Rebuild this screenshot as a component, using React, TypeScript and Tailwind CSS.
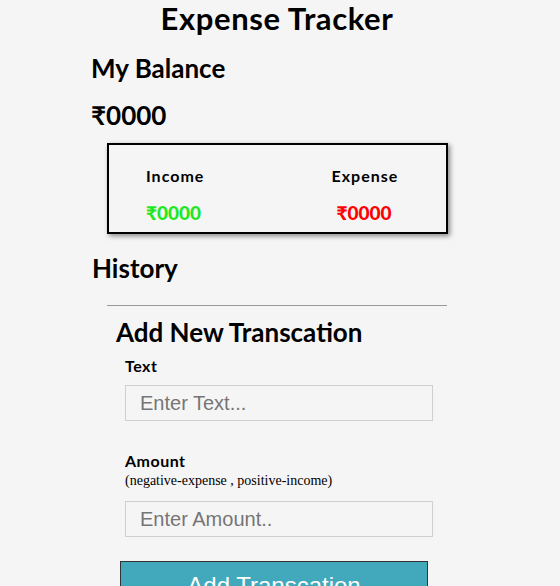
import React from "react";

export default function App() {
  const head = { fontFamily: "Lato, 'Noto Sans', sans-serif" };
  return (
    <div className="min-h-[586px] w-full bg-[#f5f5f5] text-black overflow-hidden" style={head}>
      <div className="ml-[91px] w-[372px]">
        <h1 className="text-center text-[31px] font-bold leading-[36px] tracking-[0.6px]">Expense Tracker</h1>
        <h2 className="mt-[17px] text-[26px] font-bold leading-[30px]">My Balance</h2>
        <div className="mt-[17px] text-[26px] font-bold leading-[30px]">₹0000</div>
        <div className="mt-[13px] ml-[16px] w-[341px] h-[91px] border-2 border-black shadow-[2px_2px_5px_rgba(0,0,0,0.45)] flex">
          <div className="w-1/2 pl-[37px] pt-[21px]">
            <div className="text-[16px] font-bold tracking-[1px] leading-[20px]">Income</div>
            <div className="mt-[17px] text-[19px] font-black leading-[20px] text-[#1fe81f]">₹0000</div>
          </div>
          <div className="w-1/2 pl-[54px] pt-[21px]">
            <div className="text-[16px] font-bold tracking-[1px] leading-[20px]">Expense</div>
            <div className="mt-[17px] ml-[5px] text-[19px] font-black leading-[20px] text-[#ff0000]">₹0000</div>
          </div>
        </div>
        <h2 className="mt-[19px] ml-[1px] text-[26px] font-bold leading-[30px]">History</h2>
        <div className="mt-[22px] ml-[16px] w-[340px] h-px bg-[#999]" />
        <h2 className="mt-[11px] ml-[25px] text-[26px] font-bold leading-[30px]">Add New Transcation</h2>
        <div className="ml-[34px]">
          <div className="mt-[9px] text-[16px] font-bold leading-[20px] tracking-[0.5px]">Text</div>
          <div className="mt-[9px] w-[308px] h-[36px] border border-[#cfcfcf] flex items-center pl-[14px] text-[20px] text-[#757575]" style={{ fontFamily: "'Liberation Sans', Arial, sans-serif" }}>Enter Text...</div>
          <div className="mt-[30px] text-[16px] font-bold leading-[20px] tracking-[0.5px]">Amount</div>
          <div className="text-[14px] leading-[16px] mt-[2px]" style={{ fontFamily: "'Liberation Serif', 'Times New Roman', serif" }}>(negative-expense , positive-income)</div>
          <div className="mt-[12px] w-[308px] h-[36px] border border-[#cfcfcf] flex items-center pl-[14px] text-[20px] text-[#757575]" style={{ fontFamily: "'Liberation Sans', Arial, sans-serif" }}>Enter Amount..</div>
        </div>
        <div className="mt-[24px] ml-[29px] w-[308px] h-[50px] bg-[#42a9bc] border border-[#333] text-white text-[24px] text-center pt-[10px] leading-[28px]" style={{ fontFamily: "'Liberation Sans', Arial, sans-serif" }}>Add Transcation</div>
      </div>
    </div>
  );
}
